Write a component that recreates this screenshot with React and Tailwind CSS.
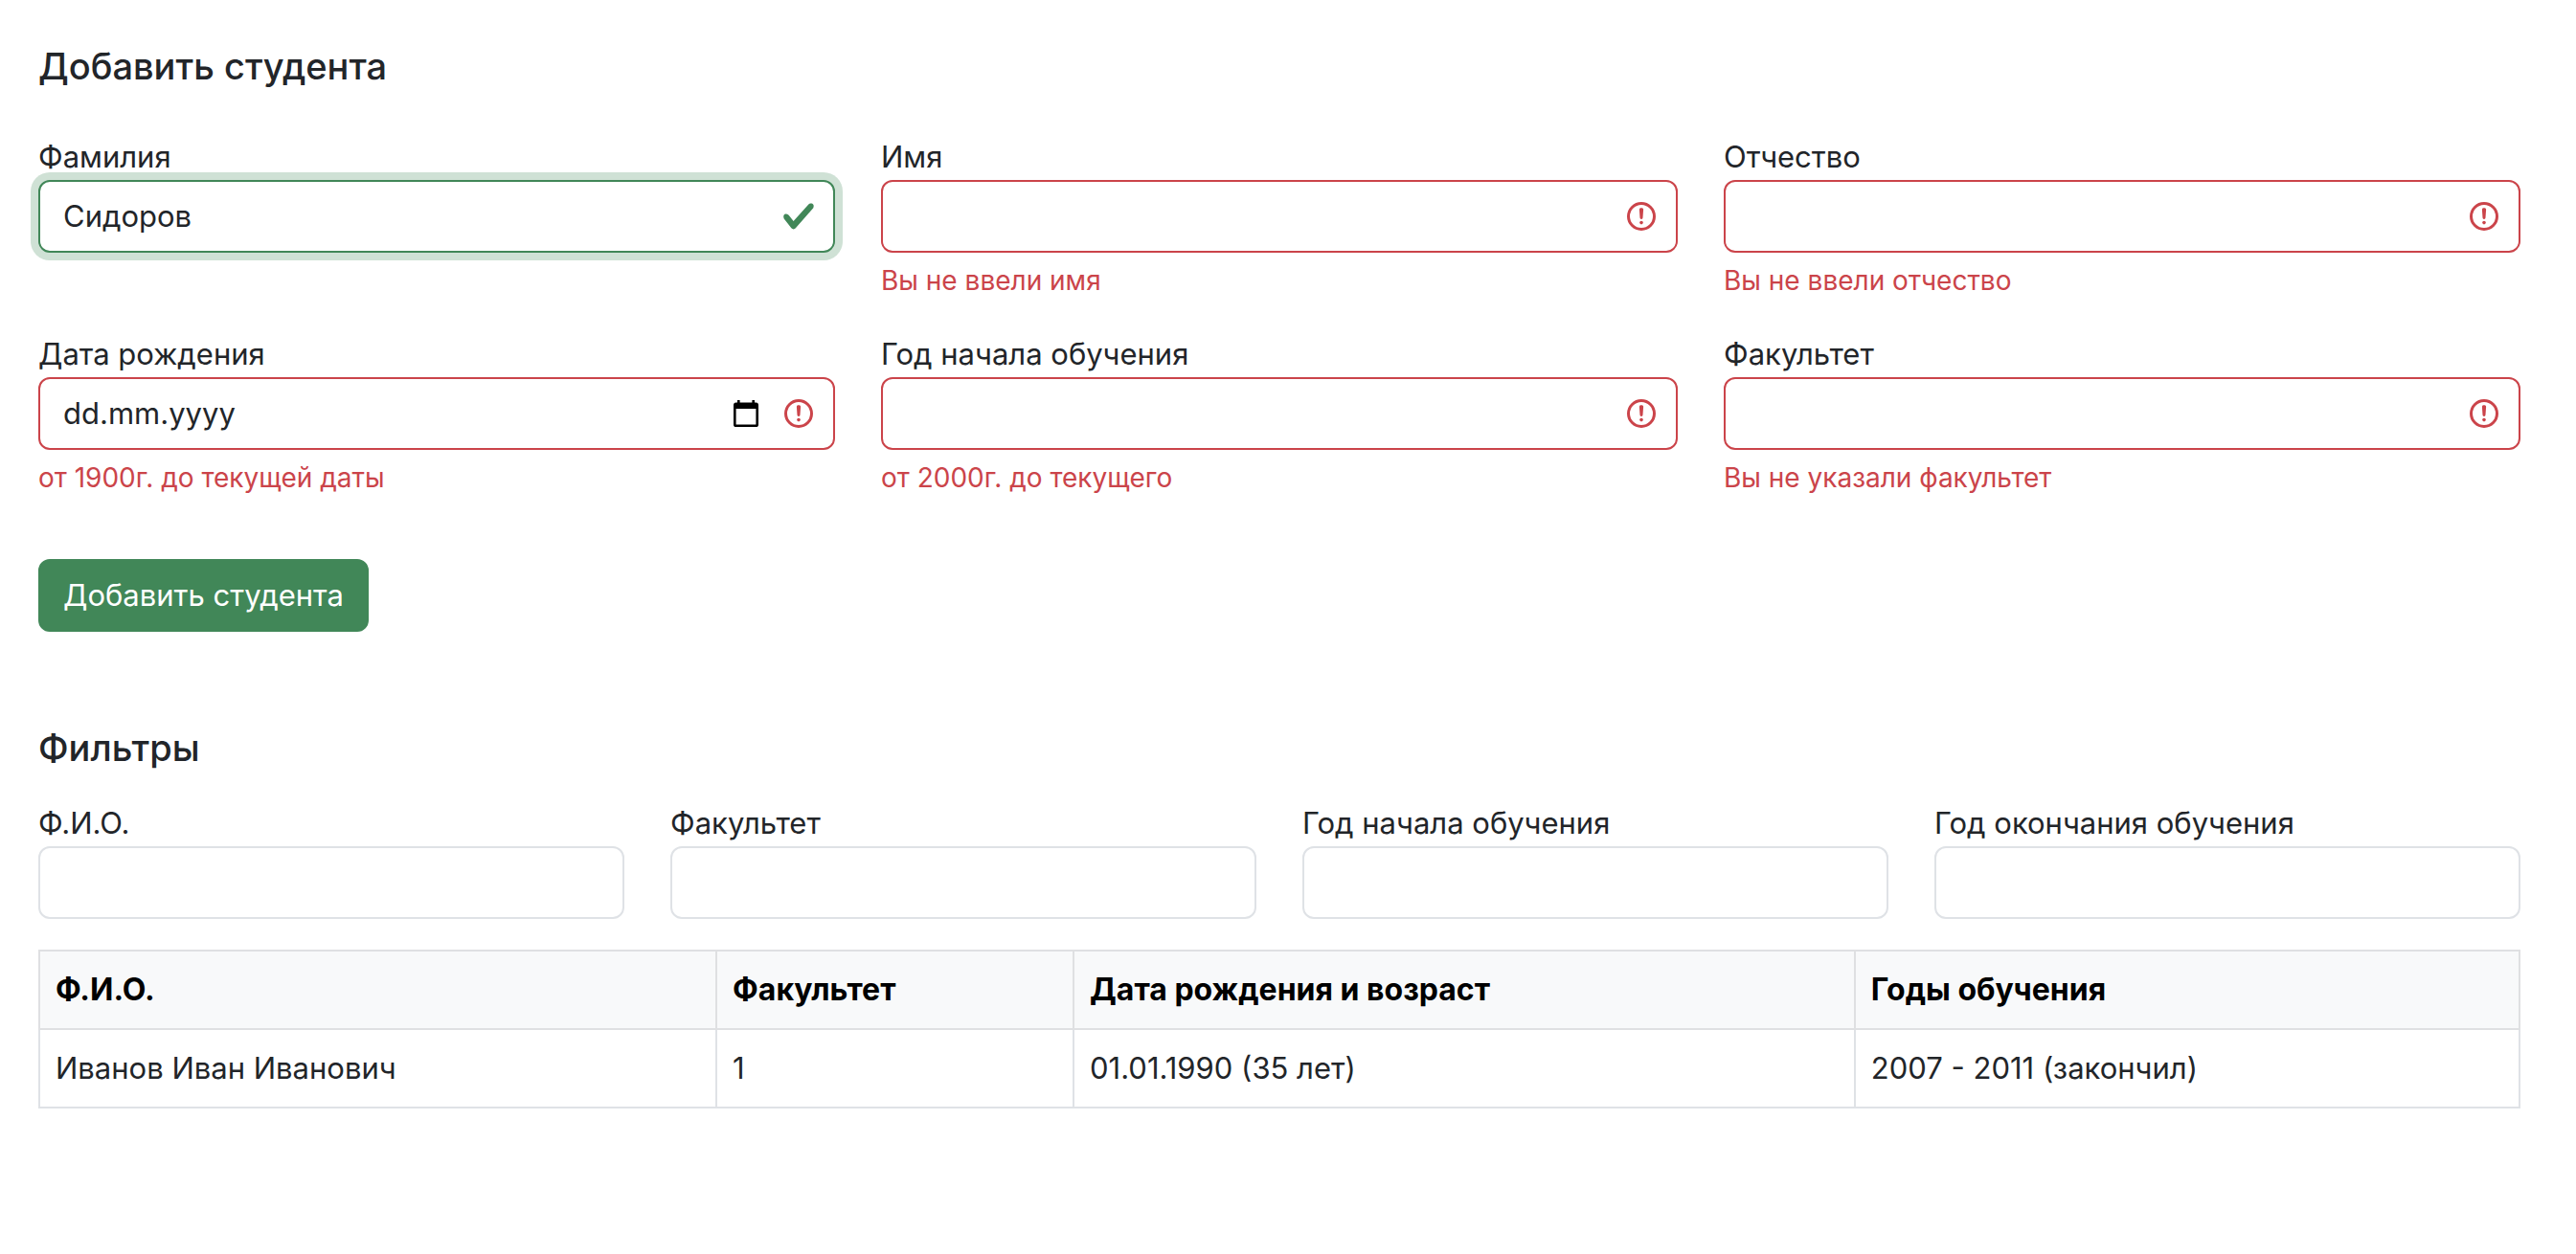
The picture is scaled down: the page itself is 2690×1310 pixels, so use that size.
import React from "react";

const CONTROL =
  "block w-full rounded-xl border-2 bg-white px-6 py-3 text-[#222529] outline-none placeholder:text-[#222529] placeholder:opacity-100";
const DEFAULT = "border-[#dfe2e6]";
const VALID = "border-[#418758] ring-8 ring-[#418758]/25 pr-18";
const INVALID = "border-[#cb444a] pr-18";

function AlertIcon() {
  return (
    <svg viewBox="0 0 12 12" className="size-9" fill="none" stroke="#cb444a" aria-hidden="true">
      <circle cx="6" cy="6" r="4.5" />
      <path strokeLinejoin="round" d="M5.8 3.6h.4L6 6.5z" />
      <circle cx="6" cy="8.2" r=".6" fill="#cb444a" stroke="none" />
    </svg>
  );
}

function CheckIcon() {
  return (
    <svg viewBox="0 0 8 8" className="size-9" fill="#418758" aria-hidden="true">
      <path d="M2.3 6.73.6 4.53c-.4-1.04.46-1.4 1.1-.8l1.1 1.4 3.4-3.8c.6-.63 1.6-.27 1.2.7l-4 4.6c-.43.5-.8.4-1.1.1z" />
    </svg>
  );
}

function CalendarIcon() {
  return (
    <svg viewBox="0 0 26 28" className="h-7 w-[26px]" fill="#000" fillRule="evenodd" aria-hidden="true">
      <path d="M4 0h2.6v2.6h12.8V0H22v2.6h1.4A2.6 2.6 0 0 1 26 5.2v20.2a2.6 2.6 0 0 1-2.6 2.6H2.6A2.6 2.6 0 0 1 0 25.400V5.2a2.6 2.6 0 0 1 2.6-2.6H4zM2.6 9v16.4h20.8V9z" />
    </svg>
  );
}

function Field({ id, label, value, placeholder, state, error, calendar }) {
  const tone = state === "valid" ? VALID : state === "invalid" ? INVALID : DEFAULT;
  return (
    <div>
      <label htmlFor={id} className="block">
        {label}
      </label>
      <div className="relative">
        <input
          id={id}
          type="text"
          defaultValue={value}
          placeholder={placeholder}
          aria-invalid={state === "invalid"}
          aria-describedby={error ? `${id}-error` : undefined}
          className={`${CONTROL} ${tone}`}
        />
        {state && (
          <div className="pointer-events-none absolute inset-y-0 right-5 flex items-center gap-6">
            {calendar && (
              <button type="button" aria-label="Выбрать дату" className="pointer-events-auto">
                <CalendarIcon />
              </button>
            )}
            {state === "valid" ? <CheckIcon /> : <AlertIcon />}
          </div>
        )}
      </div>
      {error && (
        <p id={`${id}-error`} className="mt-2 text-[28px]/[42px] text-[#cb444a]">
          {error}
        </p>
      )}
    </div>
  );
}

const STUDENT_FIELDS = [
  { id: "surname", label: "Фамилия", value: "Сидоров", state: "valid" },
  { id: "name", label: "Имя", state: "invalid", error: "Вы не ввели имя" },
  { id: "patronymic", label: "Отчество", state: "invalid", error: "Вы не ввели отчество" },
  {
    id: "birthday",
    label: "Дата рождения",
    placeholder: "dd.mm.yyyy",
    calendar: true,
    state: "invalid",
    error: "от 1900г. до текущей даты",
  },
  { id: "start", label: "Год начала обучения", state: "invalid", error: "от 2000г. до текущего" },
  { id: "faculty", label: "Факультет", state: "invalid", error: "Вы не указали факультет" },
];

const FILTER_FIELDS = [
  { id: "filter-name", label: "Ф.И.О." },
  { id: "filter-faculty", label: "Факультет" },
  { id: "filter-start", label: "Год начала обучения" },
  { id: "filter-end", label: "Год окончания обучения" },
];

const COLUMNS = [
  { title: "Ф.И.О.", width: "w-[27.3%]" },
  { title: "Факультет", width: "w-[14.4%]" },
  { title: "Дата рождения и возраст", width: "w-[31.5%]" },
  { title: "Годы обучения", width: "w-[26.8%]" },
];
const ROWS = [["Иванов Иван Иванович", "1", "01.01.1990 (35 лет)", "2007 - 2011 (закончил)"]];

export default function App() {
  return (
    <main className="min-h-screen bg-white pt-[45px] pr-[58px] pb-12 pl-10 font-['Inter','Liberation_Sans',sans-serif] text-[31px]/[48px] text-[#222529]">
      <h2 className="mb-[47px] text-[38px]/[48px] font-medium">Добавить студента</h2>
      <form onSubmit={(e) => e.preventDefault()}>
        <div className="grid grid-cols-3 gap-x-12 gap-y-8">
          {STUDENT_FIELDS.map((f) => (
            <Field key={f.id} {...f} />
          ))}
        </div>
        <button
          type="submit"
          className="mt-16 rounded-xl border-2 border-[#418758] bg-[#418758] px-6 py-3 text-white"
        >
          Добавить студента
        </button>
      </form>

      <h2 className="mt-[97px] mb-[31px] text-[38px]/[48px] font-medium">Фильтры</h2>
      <form className="mb-8 grid grid-cols-4 gap-x-12">
        {FILTER_FIELDS.map((f) => (
          <Field key={f.id} {...f} />
        ))}
      </form>

      <table className="w-full border-collapse text-left">
        <thead className="bg-[#f8f9fa] text-[32px]/[48px] text-black">
          <tr>
            {COLUMNS.map((c) => (
              <th
                key={c.title}
                scope="col"
                className={`border-2 border-[#dfe0e2] p-4 font-bold ${c.width}`}
              >
                {c.title}
              </th>
            ))}
          </tr>
        </thead>
        <tbody>
          {ROWS.map((row) => (
            <tr key={row[0]}>
              {row.map((cell) => (
                <td key={cell} className="border-2 border-[#dfe2e6] p-4">
                  {cell}
                </td>
              ))}
            </tr>
          ))}
        </tbody>
      </table>
    </main>
  );
}
